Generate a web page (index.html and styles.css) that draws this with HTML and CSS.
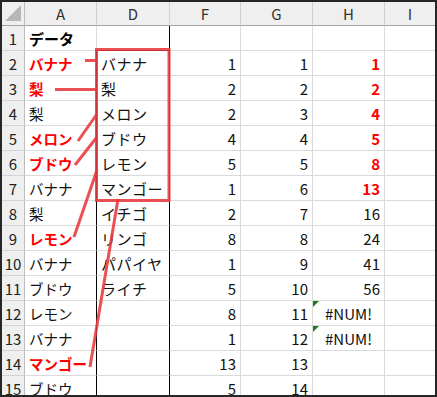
FILE: index.html
```html
<!DOCTYPE html>
<html lang="ja">
<head>
<meta charset="utf-8">
<link rel="stylesheet" href="styles.css">
</head>
<body>
<div class="frame">
  <div class="sheet">
    <div class="hd corner"><svg width="22" height="23" viewBox="0 0 22 23"><polygon points="19,3 19,19 3,19" fill="#b7b7b7"/></svg></div>
    <div class="hd col">A</div>
    <div class="hd col">D</div>
    <div class="hd col">F</div>
    <div class="hd col">G</div>
    <div class="hd col">H</div>
    <div class="hd col last">I</div>

    <div class="rh">1</div><div class="c t b">データ</div><div class="c d top-edge"></div><div class="c n"></div><div class="c n"></div><div class="c n"></div><div class="c last"></div>
    <div class="rh">2</div><div class="c t red ab">バナナ</div><div class="c d t">バナナ</div><div class="c n">1</div><div class="c n">1</div><div class="c n red">1</div><div class="c last"></div>
    <div class="rh">3</div><div class="c t red ab">梨</div><div class="c d t">梨</div><div class="c n">2</div><div class="c n">2</div><div class="c n red">2</div><div class="c last"></div>
    <div class="rh">4</div><div class="c t ab">梨</div><div class="c d t">メロン</div><div class="c n">2</div><div class="c n">3</div><div class="c n red">4</div><div class="c last"></div>
    <div class="rh">5</div><div class="c t red ab">メロン</div><div class="c d t">ブドウ</div><div class="c n">4</div><div class="c n">4</div><div class="c n red">5</div><div class="c last"></div>
    <div class="rh">6</div><div class="c t red ab">ブドウ</div><div class="c d t">レモン</div><div class="c n">5</div><div class="c n">5</div><div class="c n red">8</div><div class="c last"></div>
    <div class="rh">7</div><div class="c t ab">バナナ</div><div class="c d t">マンゴー</div><div class="c n">1</div><div class="c n">6</div><div class="c n red">13</div><div class="c last"></div>
    <div class="rh">8</div><div class="c t ab">梨</div><div class="c d t">イチゴ</div><div class="c n">2</div><div class="c n">7</div><div class="c n">16</div><div class="c last"></div>
    <div class="rh">9</div><div class="c t red ab">レモン</div><div class="c d t">リンゴ</div><div class="c n">8</div><div class="c n">8</div><div class="c n">24</div><div class="c last"></div>
    <div class="rh">10</div><div class="c t ab">バナナ</div><div class="c d t">パパイヤ</div><div class="c n">1</div><div class="c n">9</div><div class="c n">41</div><div class="c last"></div>
    <div class="rh">11</div><div class="c t ab">ブドウ</div><div class="c d t">ライチ</div><div class="c n">5</div><div class="c n">10</div><div class="c n">56</div><div class="c last"></div>
    <div class="rh">12</div><div class="c t ab">レモン</div><div class="c d"></div><div class="c n">8</div><div class="c n">11</div><div class="c err">#NUM!</div><div class="c last"></div>
    <div class="rh">13</div><div class="c t ab">バナナ</div><div class="c d"></div><div class="c n">1</div><div class="c n">12</div><div class="c err">#NUM!</div><div class="c last"></div>
    <div class="rh">14</div><div class="c t red ab">マンゴー</div><div class="c d"></div><div class="c n">13</div><div class="c n">13</div><div class="c n"></div><div class="c last"></div>
    <div class="rh">15</div><div class="c t ab">ブドウ</div><div class="c d"></div><div class="c n">5</div><div class="c n">14</div><div class="c n"></div><div class="c last"></div>
  </div>
  <svg class="marks" width="437" height="397" viewBox="0 0 437 397">
    <g stroke="#e8383e" stroke-opacity="0.88" stroke-width="3" fill="none" stroke-linecap="butt">
      <rect x="96.5" y="49.5" width="72.5" height="151"/>
      <line x1="85" y1="60.5" x2="97" y2="60.5"/>
      <line x1="55" y1="89.5" x2="97" y2="89.5"/>
      <line x1="78" y1="141" x2="97" y2="114"/>
      <line x1="75" y1="165" x2="97" y2="137"/>
      <line x1="74" y1="237" x2="97" y2="170"/>
      <line x1="90" y1="367" x2="118" y2="199"/>
    </g>
  </svg>
</div>
</body>
</html>
```

FILE: styles.css
```css
* { box-sizing: border-box; }
html, body { margin: 0; padding: 0; background: #262626; }
body { width: 437px; height: 397px; overflow: hidden; }

.frame {
  position: relative;
  width: 437px;
  height: 397px;
  border: 2px solid #262626;
  background: #ffffff;
  overflow: hidden;
}

.sheet {
  display: grid;
  grid-template-columns: 23px 72px 73px 71px 72px 72px 50px;
  grid-template-rows: 24px;
  grid-auto-rows: 25px;
  font-family: "Noto Sans CJK JP", "Noto Sans", sans-serif;
  font-size: 15px;
  color: #111;
}

.hd {
  background: #efefef;
  border-right: 1px solid #d0d0d0;
  border-bottom: 1px solid #a3a3a3;
  display: flex;
  align-items: center;
  justify-content: center;
  color: #333;
  font-size: 15px;
}
.hd.corner { border-right: 1px solid #bdbdbd; display: block; }
.hd.corner svg { display: block; }
.hd.last { border-right: none; }

.rh {
  background: #efefef;
  border-right: 1px solid #bdbdbd;
  border-bottom: 1px solid #d3d3d3;
  display: flex;
  align-items: center;
  justify-content: center;
  color: #222;
  font-size: 15px;
  padding-top: 1px;
}

.c {
  border-right: 1px solid #dadada;
  border-bottom: 1px solid #dadada;
  display: flex;
  align-items: center;
  padding: 1px 4px 0 4px;
  white-space: nowrap;
  overflow: hidden;
  position: relative;
}
.c.last { border-right: none; }
.t { justify-content: flex-start; }
.d.t { letter-spacing: 0.5px; }
.ab { font-size: 14.5px; }
.n { justify-content: flex-end; }
.b { font-weight: bold; color: #000; }
.red { color: #ff0000; font-weight: bold; }
.ab { border-right-color: #000; }
.d { border-right-color: #000; }
.top-edge { border-bottom-color: #000; }

.err { justify-content: center; }
.err::before {
  content: "";
  position: absolute;
  left: 0;
  top: 0;
  border-top: 6px solid #1e7b1e;
  border-right: 6px solid transparent;
}

.marks {
  position: absolute;
  left: -2px;
  top: -2px;
  pointer-events: none;
}
```
